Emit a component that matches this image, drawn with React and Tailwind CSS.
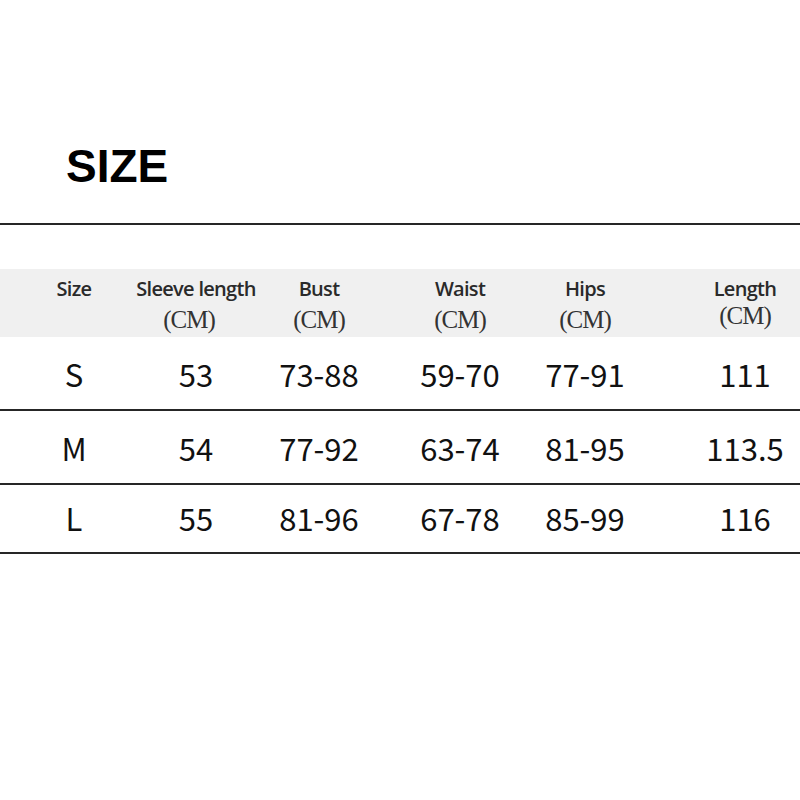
const cols = ["Size", "Sleeve length", "Bust", "Waist", "Hips", "Length"];

const rows = [
  ["S", "53", "73-88", "59-70", "77-91", "111"],
  ["M", "54", "77-92", "63-74", "81-95", "113.5"],
  ["L", "55", "81-96", "67-78", "85-99", "116"],
];

const grid = "grid grid-cols-[148px_96px_150px_132px_118px_1fr]";

export default function App() {
  return (
    <div className="w-[800px] h-[800px] bg-white overflow-hidden">
      <div className="pt-[143px] pl-[66px]">
        <h1 className="text-[46px] leading-none font-bold text-black font-['Liberation_Sans',Arial,sans-serif]">
          SIZE
        </h1>
      </div>
      <div className="mt-[34px] h-[2px] bg-[#262626]" />

      <div className={`${grid} mt-[44px] h-[68px] bg-[#f0f0f0] text-[#2a2a2a]`}>
        {cols.map((c, i) => (
          <div
            key={c}
            className={`flex flex-col items-center pt-[7px] ${i === 5 ? "pl-[46px]" : ""}`}
          >
            <span className="whitespace-nowrap text-[20px] leading-[26px] font-semibold font-['Open_Sans','Noto_Sans',sans-serif] tracking-[-0.7px]">
              {c}
            </span>
            {i > 0 && (
              <span
                className={`whitespace-nowrap text-[25px] leading-[28px] font-['Liberation_Serif','Times_New_Roman',serif] text-[#333] tracking-[-1px] ${
                  i === 1 ? "-ml-[14px] mt-[4px]" : i === 5 ? "mt-0" : "mt-[4px]"
                }`}
              >
                (CM)
              </span>
            )}
          </div>
        ))}
      </div>

      {rows.map((r, k) => (
        <div
          key={r[0]}
          className={`${grid} ${k === 2 ? "h-[69px]" : "h-[74px]"} border-b-2 border-[#262626] items-center text-[31px] text-[#111] font-['Noto_Sans_CJK_SC','Noto_Sans',sans-serif]`}
        >
          {r.map((v, i) => (
            <div
              key={i}
              className={`text-center ${k === 2 ? "pt-0" : "pt-[2px]"} ${i === 5 ? "pl-[46px]" : ""}`}
            >
              {v}
            </div>
          ))}
        </div>
      ))}
    </div>
  );
}
